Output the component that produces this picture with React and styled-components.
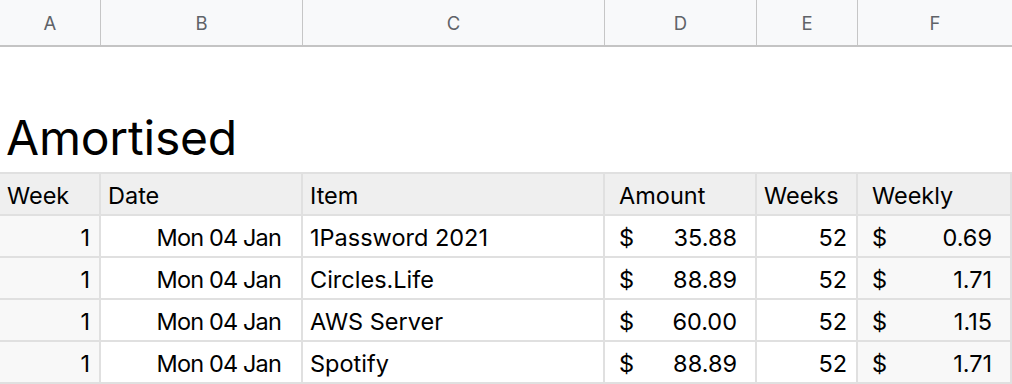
import React from "react";
import styled, { createGlobalStyle } from "styled-components";

const COLS = "101px 202px 302px 152px 101px 1fr";

const GlobalStyle = createGlobalStyle`
  html, body {
    margin: 0;
    padding: 0;
    background: #ffffff;
    font-family: Inter, "Noto Sans", sans-serif;
  }
`;

const Page = styled.div`
  width: 1012px;
  height: 384px;
  overflow: hidden;
  display: flex;
  flex-direction: column;
`;

const ColumnBar = styled.div`
  display: grid;
  grid-template-columns: ${COLS};
  height: 45px;
  background: #f8f9fa;
  border-bottom: 2px solid #c4c4c4;
`;

const ColumnLetter = styled.div`
  display: flex;
  align-items: center;
  justify-content: center;
  font-size: 18.5px;
  color: #5f6368;
  border-right: ${(p) => (p.$last ? "none" : "1.5px solid #c6c6c6")};
  padding-top: 1px;
`;

const TitleBlock = styled.div`
  height: 125px;
  display: flex;
  align-items: flex-end;
  padding: 0 0 10px 6px;
  box-sizing: border-box;
`;

const Title = styled.h1`
  margin: 0;
  font-size: 48px;
  font-weight: 400;
  line-height: 1;
  color: #000;
  letter-spacing: -0.2px;
`;

const Table = styled.div`
  display: grid;
  grid-template-columns: ${COLS};
  grid-auto-rows: 42px;
  border-top: 2px solid #e0e0e0;
`;

const Cell = styled.div`
  display: flex;
  align-items: center;
  box-sizing: border-box;
  border-right: 2px solid #e0e0e0;
  border-bottom: 2px solid #e0e0e0;
  padding: 2px ${(p) => p.$padRight || 9}px 0 ${(p) => p.$padLeft || 7}px;
  justify-content: ${(p) => (p.$right ? "flex-end" : "flex-start")};
  background: ${(p) => (p.$head ? "#efefef" : p.$shade ? "#f8f8f8" : "#ffffff")};
  font-size: 23.5px;
  color: #000;
  white-space: nowrap;
`;

const DateText = styled.span`
  letter-spacing: -0.85px;
`;

const Money = styled(Cell)`
  justify-content: space-between;
  padding-left: 14px;
  padding-right: 18px;
`;

const rows = [
  { item: "1Password 2021", amount: "35.88", weekly: "0.69" },
  { item: "Circles.Life", amount: "88.89", weekly: "1.71" },
  { item: "AWS Server", amount: "60.00", weekly: "1.15" },
  { item: "Spotify", amount: "88.89", weekly: "1.71" },
];

export default function App() {
  const letters = ["A", "B", "C", "D", "E", "F"];
  return (
    <Page>
      <GlobalStyle />
      <ColumnBar>
        {letters.map((l, i) => (
          <ColumnLetter key={l} $last={i === letters.length - 1}>
            {l}
          </ColumnLetter>
        ))}
      </ColumnBar>
      <TitleBlock>
        <Title>Amortised</Title>
      </TitleBlock>
      <Table>
        <Cell $head>Week</Cell>
        <Cell $head>Date</Cell>
        <Cell $head>Item</Cell>
        <Cell $head $padLeft={14}>Amount</Cell>
        <Cell $head>Weeks</Cell>
        <Cell $head $padLeft={14}>Weekly</Cell>
        {rows.map((r) => (
          <React.Fragment key={r.item}>
            <Cell $right $shade>1</Cell>
            <Cell $right $padRight={20}>
              <DateText>Mon 04 Jan</DateText>
            </Cell>
            <Cell>{r.item}</Cell>
            <Money>
              <span>$</span>
              <span>{r.amount}</span>
            </Money>
            <Cell $right>52</Cell>
            <Money $shade>
              <span>$</span>
              <span>{r.weekly}</span>
            </Money>
          </React.Fragment>
        ))}
      </Table>
    </Page>
  );
}
